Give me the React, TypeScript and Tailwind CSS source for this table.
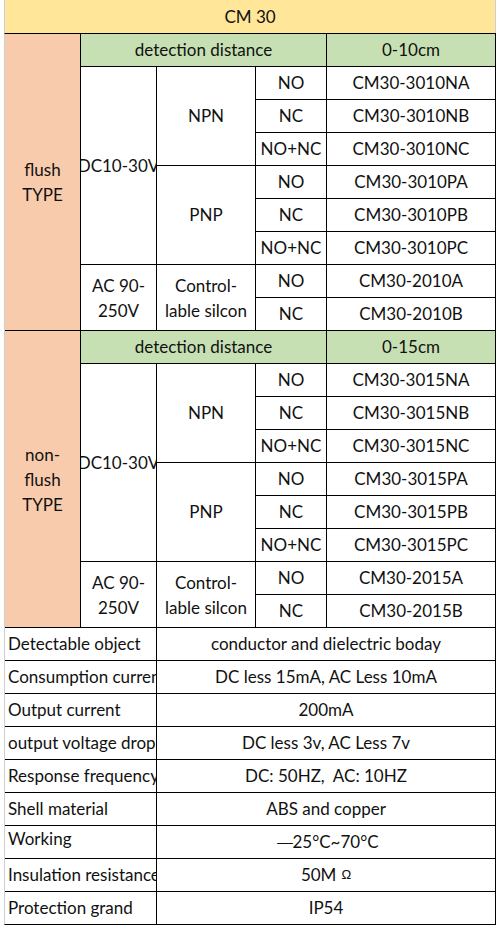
import { twMerge } from 'tailwind-merge';
import type { ReactNode } from 'react';

type CellProps = { className?: string; children?: ReactNode };

function Cell({ className, children }: CellProps) {
  return (
    <div className={twMerge('flex items-center justify-center overflow-hidden whitespace-nowrap bg-white text-center', className)}>
      {children}
    </div>
  );
}

type Section = {
  label: ReactNode;
  distance: string;
  code: string;
};

const sections: Section[] = [
  { label: <>flush<br />TYPE</>, distance: '0-10cm', code: '10' },
  { label: <>non-<br />flush<br />TYPE</>, distance: '0-15cm', code: '15' },
];

const specs: { label: ReactNode; value: ReactNode; top?: boolean }[] = [
  { label: 'Detectable object', value: 'conductor and dielectric boday' },
  { label: 'Consumption current', value: 'DC less 15mA, AC Less 10mA' },
  { label: 'Output current', value: '200mA' },
  { label: 'output voltage drop', value: 'DC less 3v, AC Less 7v' },
  { label: 'Response frequency', value: <>DC: 50HZ,&nbsp; AC: 10HZ</> },
  { label: 'Shell material', value: 'ABS and copper' },
  {
    label: <>Working<br />temperature</>,
    value: (
      <>
        <span className="inline-block w-[19px] origin-left scale-x-125 align-[1px] font-['DejaVu_Sans',sans-serif] text-[14px] leading-none">—</span>
        <span>25°C~70°C</span>
      </>
    ),
    top: true,
  },
  {
    label: 'Insulation resistance',
    value: (
      <>
        50M<span className="ml-[5px] align-[4px] font-['Liberation_Sans',sans-serif] text-[13px]">Ω</span>
      </>
    ),
  },
  { label: 'Protection grand', value: 'IP54' },
];

function SectionRows({ s }: { s: Section }) {
  const outs = ['NO', 'NC', 'NO+NC'];
  return (
    <>
      <Cell className="row-span-9 whitespace-normal bg-[#f8cbad] leading-[25px]">
        <div>{s.label}</div>
      </Cell>
      <Cell className="col-span-3 bg-[#c6e0b4]">detection distance</Cell>
      <Cell className="bg-[#c6e0b4]">{s.distance}</Cell>

      <Cell className="row-span-6">DC10-30V</Cell>
      {(['N', 'P'] as const).map((t) => (
        <OutputGroup key={t} t={t} code={s.code} outs={outs} />
      ))}

      <Cell className="row-span-2 leading-[25px]">
        <div>AC 90-<br />250V</div>
      </Cell>
      <Cell className="row-span-2 leading-[25px]">
        <div>Control-<br />lable silcon</div>
      </Cell>
      <Cell>NO</Cell>
      <Cell>CM30-20{s.code}A</Cell>
      <Cell>NC</Cell>
      <Cell>CM30-20{s.code}B</Cell>
    </>
  );
}

function OutputGroup({ t, code, outs }: { t: 'N' | 'P'; code: string; outs: string[] }) {
  const suffix = ['A', 'B', 'C'];
  return (
    <>
      <Cell className="row-span-3">{t === 'N' ? 'NPN' : 'PNP'}</Cell>
      {outs.map((o, i) => (
        <Pair key={o} a={o} b={`CM30-30${code}${t}${suffix[i]}`} />
      ))}
    </>
  );
}

function Pair({ a, b }: { a: string; b: string }) {
  return (
    <>
      <Cell>{a}</Cell>
      <Cell>{b}</Cell>
    </>
  );
}

export default function App() {
  return (
    <div className="min-h-screen bg-white font-['Lato',sans-serif] text-[17px] text-[#111]">
      <div className="ml-[4px] w-[492px]">
        <div className="flex h-[33px] items-center justify-center border-x border-[#cfcfcf] bg-[#ffe699]">
          CM 30
        </div>
        <div className="grid grid-cols-[75px_75px_98px_70px_168px] grid-rows-[repeat(27,32px)] gap-px border-t border-b border-l border-r border-t-black border-b-black border-l-[#cfcfcf] border-r-black bg-black">
          {sections.map((s) => (
            <SectionRows key={s.code} s={s} />
          ))}
          {specs.map((sp, i) => (
            <Spec key={i} label={sp.label} value={sp.value} top={sp.top} />
          ))}
        </div>
      </div>
    </div>
  );
}

function Spec({ label, value, top }: { label: ReactNode; value: ReactNode; top?: boolean }) {
  return (
    <>
      <div
        className={twMerge(
          'col-span-2 flex overflow-hidden whitespace-nowrap bg-white pl-[3px]',
          top ? 'items-start leading-[25px]' : 'items-center',
        )}
      >
        <div>{label}</div>
      </div>
      <Cell className="col-span-3">{value}</Cell>
    </>
  );
}
